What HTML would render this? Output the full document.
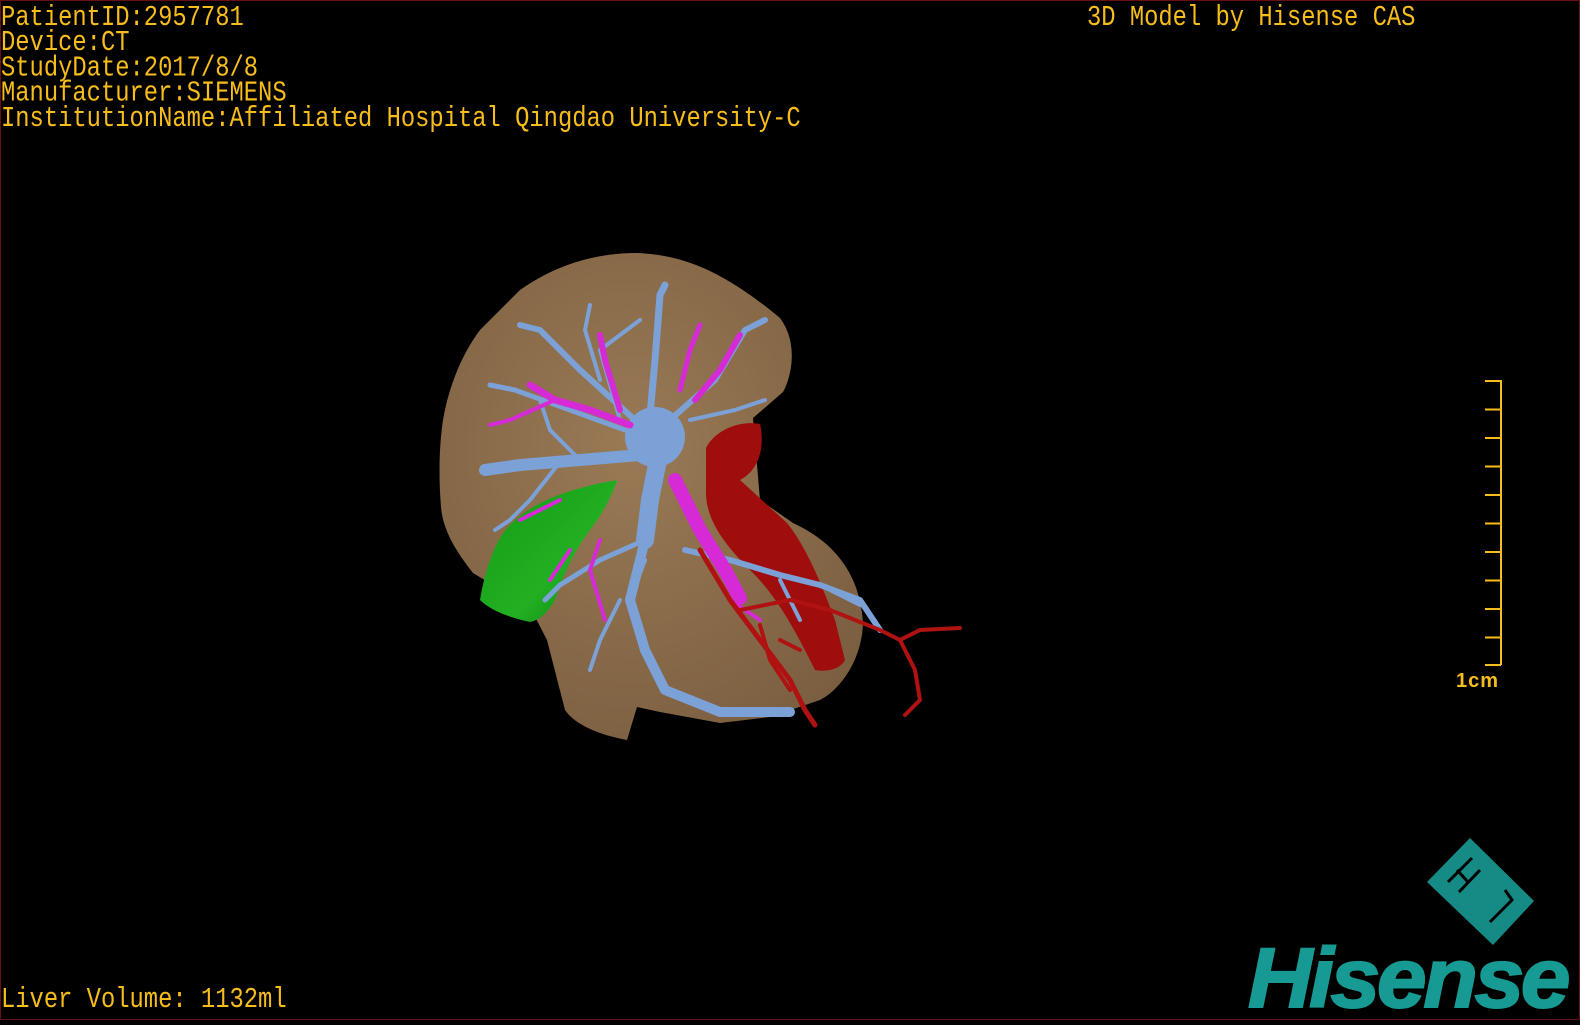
<!DOCTYPE html>
<html><head><meta charset="utf-8"><style>
html,body{margin:0;padding:0;background:#000;}
body{width:1580px;height:1020px;position:relative;overflow:hidden;}
.frame{position:absolute;left:0;top:0;width:1578px;height:1018px;border:1px solid #6a0f10;}
.t{position:absolute;color:#f7bd1c;font-family:"Liberation Mono",monospace;font-size:23.8px;line-height:20.9px;white-space:pre;transform-origin:0 0;transform:scaleY(1.2);}
</style></head><body>
<svg width="1580" height="1020" style="position:absolute;left:0;top:0">
<defs>
<radialGradient id="lv" cx="0.45" cy="0.4" r="0.7"><stop offset="0" stop-color="#9a7a55"/><stop offset="1" stop-color="#7a5e40"/></radialGradient>
<linearGradient id="gr" x1="0" y1="0" x2="1" y2="1"><stop offset="0" stop-color="#139a13"/><stop offset="0.6" stop-color="#22b022"/><stop offset="1" stop-color="#0c7a0c"/></linearGradient>
</defs>
<path fill="url(#lv)" d="M520,290 C560,262 600,253 637,253 C680,255 720,268 780,318 C800,345 790,380 783,392 L753,418 L760,500 L793,523 C830,540 860,570 863,623 C862,660 840,690 820,700 L770,717 L720,723 L660,712 L637,707 L627,740 C600,735 575,725 565,710 L547,640 L530,607 L473,573 C455,550 443,530 441,507 C438,470 440,440 443,420 C450,380 465,350 480,330 Z"/>
<path fill="url(#gr)" d="M480,600 C485,570 495,540 510,525 C530,505 560,490 617,480 C612,495 605,510 590,530 C575,550 565,570 555,600 C548,612 540,620 530,622 C510,618 490,610 480,600 Z"/>
<path fill="#a00d0d" d="M706,448 C715,430 740,420 760,424 C765,445 760,470 740,480 L787,523 C805,545 820,580 835,620 L845,660 C840,670 825,672 815,670 C800,640 780,600 753,573 C725,545 705,520 706,490 Z"/>
<g fill="none" stroke="#7ca1d6" stroke-linecap="round" stroke-linejoin="round">
<circle cx="655" cy="437" r="30" fill="#7ca1d6" stroke="none"/>
<path stroke-width="18" d="M660,450 L650,500 L645,540"/>
<path stroke-width="10" d="M645,540 L630,600 L645,650 L665,690 L720,712 L790,712"/>
<path stroke-width="12" d="M640,455 L580,460 L520,465 L485,470"/>
<path stroke-width="7" d="M650,415 L655,360 L660,295 L665,285"/>
<path stroke-width="6" d="M635,420 L580,370 L540,330 L520,325"/>
<path stroke-width="6" d="M670,420 L715,380 L745,330 L765,320"/>
<path stroke-width="5" d="M625,430 L570,410 L515,390 L490,385"/>
<path stroke-width="6" d="M685,550 L730,560 L780,575 L820,585 L860,600 L880,630"/>
<path stroke-width="5" d="M645,540 L600,560 L560,585 L545,600"/>
<path stroke-width="4" d="M560,462 L530,500 L510,520 L495,530"/>
<path stroke-width="4" d="M620,600 L600,640 L590,670 M645,560 L630,600 M780,580 L800,620 M830,590 L860,605"/>
<path stroke-width="4" d="M690,420 L735,410 L765,400 M600,380 L585,330 L590,305 M620,420 L600,350 L640,320 M580,460 L550,430 L540,400"/>
</g>
<g fill="none" stroke="#d62ad6" stroke-linecap="round" stroke-linejoin="round">
<path stroke-width="14" d="M675,480 L700,530 L725,570 L740,598"/>
<path stroke-width="7" d="M630,425 L590,410 L555,400 L530,385"/>
<path stroke-width="6" d="M620,410 L605,360 L600,335"/>
<path stroke-width="6" d="M695,400 L720,370 L740,335"/>
<path stroke-width="5" d="M680,390 L690,350 L700,325"/>
<path stroke-width="4" d="M555,400 L510,420 L490,425 M600,540 L590,570 L605,620 M570,550 L550,580 M730,600 L760,620 M560,500 L520,520"/>
</g>
<g fill="none" stroke="#b01212" stroke-linecap="round" stroke-linejoin="round">
<path stroke-width="5" d="M700,550 L730,600 L760,640 L790,680 L805,710 L815,725"/>
<path stroke-width="4" d="M740,610 L790,600 L830,610 L880,630 L900,640 L920,630 L960,628"/>
<path stroke-width="4" d="M900,640 L915,670 L920,700 L905,715 M780,640 L800,650 M760,625 L770,660 L790,690"/>
</g>
<g stroke="#f7bd1c" stroke-width="2" fill="none">
<path d="M1501,380 V665"/>
<path d="M1485,381H1501M1485,409.5H1501M1485,438H1501M1485,466.5H1501M1485,495H1501M1485,523.5H1501M1485,552H1501M1485,580.5H1501M1485,609H1501M1485,637.5H1501M1485,665H1501"/>
</g>
<polygon points="1470,838 1534,901 1493,945 1427,882" fill="#168b86"/>
<path d="M1448,882 L1472,858 M1459,892 L1480,870 M1457,870 L1468,882 M1505,890 L1512,900 L1490,922" stroke="#000" stroke-width="3" fill="none"/>
</svg>
<div class="frame"></div>
<div class="t" style="left:1px;top:7px">PatientID:2957781
Device:CT
StudyDate:2017/8/8
Manufacturer:SIEMENS
InstitutionName:Affiliated Hospital Qingdao University-C</div>
<div class="t" style="left:1087px;top:7px">3D Model by Hisense CAS</div>
<div class="t" style="left:1px;top:989px">Liver Volume: 1132ml</div>
<div style="position:absolute;left:1456px;top:670px;color:#f7bd1c;font-family:'Liberation Sans',sans-serif;font-size:20px;font-weight:bold;letter-spacing:1px">1cm</div>
<div style="position:absolute;left:1248px;top:936px;color:#169a93;font-family:'Liberation Sans',sans-serif;font-size:84px;font-weight:bold;font-style:italic;letter-spacing:-3px;line-height:84px;transform:scaleX(1.06);transform-origin:0 0;-webkit-text-stroke:2px #169a93">Hisense</div>
</body></html>
